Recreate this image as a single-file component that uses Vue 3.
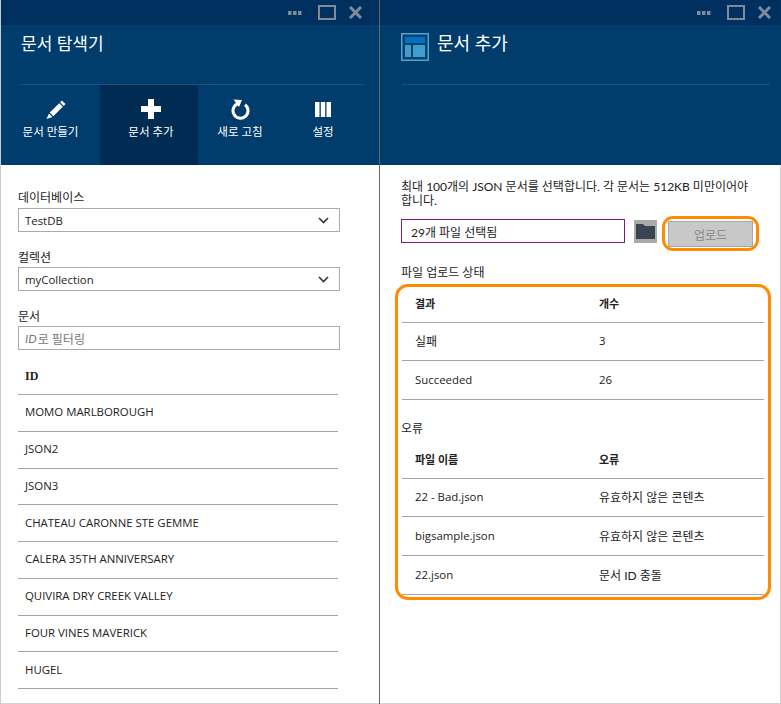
<template>
  <div class="page">
    <section class="blade blade-left">
      <header class="head">
        <div class="strip strip-left">
          <svg class="dots" width="14" height="4" viewBox="0 0 14 4"><path d="M0 0h3.500v4H0zM5 0h3.500v4H5zM10 0h3.500v4H10z" /></svg>
          <svg class="square" width="18" height="15" viewBox="0 0 18 15"><rect x="1" y="1" width="16" height="13" fill="none" stroke-width="2" /></svg>
          <svg class="close" width="13" height="13" viewBox="0 0 13 13"><path d="M1 1l11 11M12 1L1 12" fill="none" stroke-width="3" /></svg>
        </div>
        <div class="title-row title-row-left">
          <h1 class="title">문서 탐색기</h1>
        </div>
        <div class="commands">
          <div class="cmd" v-for="c in commands" :key="c.label" :class="{ active: c.active }">
            <svg class="cmd-icon" :class="c.icon" width="22" height="22" viewBox="0 0 22 22">
              <path v-if="c.icon == 'pencil'" d="M17 2.500l3.500 3.500-1.800 1.900-3.600-3.600zM14.300 5.200l3.500 3.500L8.300 18.200l-3.600-3.600zM4 15.500l3.400 3.400L1.500 21z" fill="#fff" />
              <path v-if="c.icon == 'plus'" d="M8 1h6v7h7v6h-7v7H8v-7H1V8h7z" fill="#fff" />
              <g v-if="c.icon == 'refresh'">
                <path d="M9.500 5.500a7.500 7.500 0 1 0 6.500 1.200" fill="none" stroke="#fff" stroke-width="3" />
                <path d="M3.500 1.500l8.500 0.500-3 7z" fill="#fff" transform="translate(1 0)" />
              </g>
              <path v-if="c.icon == 'columns'" d="M3 4h4.500v15H3zM8.800 4h4.400v15H8.800zM14.500 4H19v15h-4.500z" fill="#fff" />
            </svg>
            <span class="cmd-label">{{ c.label }}</span>
          </div>
        </div>
      </header>
      <div class="body body-left">
        <label class="field-label">데이터베이스</label>
        <div class="select">
          <span class="latin">TestDB</span>
          <svg width="11" height="7" viewBox="0 0 11 7"><path d="M1 1l4.500 4.500L10 1" fill="none" stroke="#333" stroke-width="1.600" /></svg>
        </div>
        <label class="field-label spaced">컬렉션</label>
        <div class="select">
          <span class="latin">myCollection</span>
          <svg width="11" height="7" viewBox="0 0 11 7"><path d="M1 1l4.500 4.500L10 1" fill="none" stroke="#333" stroke-width="1.600" /></svg>
        </div>
        <label class="field-label spaced">문서</label>
        <div class="select filter"><i>ID</i>로 필터링</div>
        <div class="doc-list">
          <div class="doc-head">ID</div>
          <div class="doc-row latin" v-for="d in docs" :key="d">{{ d }}</div>
        </div>
      </div>
    </section>

    <section class="blade blade-right">
      <header class="head">
        <div class="strip strip-right">
          <svg class="dots" width="14" height="4" viewBox="0 0 14 4"><path d="M0 0h3.500v4H0zM5 0h3.500v4H5zM10 0h3.500v4H10z" /></svg>
          <svg class="square" width="18" height="15" viewBox="0 0 18 15"><rect x="1" y="1" width="16" height="13" fill="none" stroke-width="2" /></svg>
          <svg class="close" width="13" height="13" viewBox="0 0 13 13"><path d="M1 1l11 11M12 1L1 12" fill="none" stroke-width="3" /></svg>
        </div>
        <div class="title-row title-row-right">
          <svg class="blade-icon" width="28" height="28" viewBox="0 0 28 28">
            <rect width="28" height="28" fill="#4ba6d3" />
            <rect x="1.500" y="1.500" width="25" height="25" fill="#0b3f6b" />
            <rect x="4" y="4" width="20" height="6" fill="#0072c6" />
            <rect x="4" y="12" width="6" height="12" fill="#3d9fce" />
            <rect x="12" y="12" width="12" height="12" fill="#3d9fce" />
          </svg>
          <h1 class="title">문서 추가</h1>
        </div>
      </header>
      <div class="body body-right">
        <p class="intro">최대 100개의 JSON 문서를 선택합니다. 각 문서는 512KB 미만이어야 합니다.</p>
        <div class="upload-row">
          <div class="file-box">29개 파일 선택됨</div>
          <div class="folder-btn">
            <svg width="19" height="15" viewBox="0 0 19 15"><path d="M0 0h7l2 2h10v13H0z" fill="#3a4552" /></svg>
          </div>
          <div class="ring ring-btn">
            <div class="upload-btn">업로드</div>
          </div>
        </div>
        <div class="status-label">파일 업로드 상태</div>
        <div class="ring ring-table">
          <div class="t-row t-head"><span>결과</span><span>개수</span></div>
          <div class="t-row" v-for="r in results" :key="r[0]">
            <span :class="{ latin: isLatin(r[0]) }">{{ r[0] }}</span><span :class="{ latin: isLatin(r[1]) }">{{ r[1] }}</span>
          </div>
          <div class="err-label">오류</div>
          <div class="t-row t-head"><span>파일 이름</span><span>오류</span></div>
          <div class="t-row" v-for="r in errors" :key="r[0]">
            <span :class="{ latin: isLatin(r[0]) }">{{ r[0] }}</span><span>{{ r[1] }}</span>
          </div>
        </div>
      </div>
    </section>
  </div>
</template>

<script setup>
const commands = [
  { label: "문서 만들기", icon: "pencil" },
  { label: "문서 추가", icon: "plus", active: true },
  { label: "새로 고침", icon: "refresh" },
  { label: "설정", icon: "columns" },
];

const docs = [
  "MOMO MARLBOROUGH",
  "JSON2",
  "JSON3",
  "CHATEAU CARONNE STE GEMME",
  "CALERA 35TH ANNIVERSARY",
  "QUIVIRA DRY CREEK VALLEY",
  "FOUR VINES MAVERICK",
  "HUGEL",
];

const results = [
  ["실패", "3"],
  ["Succeeded", "26"],
];

const errors = [
  ["22 - Bad.json", "유효하지 않은 콘텐츠"],
  ["bigsample.json", "유효하지 않은 콘텐츠"],
  ["22.json", "문서 ID 충돌"],
];

function isLatin(text) {
  return /^[\x00-\x7f]+$/.test(text);
}
</script>

<style>
body {
  background: #fff;
}
</style>

<style scoped>
.page {
  display: flex;
  width: 781px;
  height: 704px;
  overflow: hidden;
  background: #fff;
  color: #222;
  font-family: Lato, "Noto Sans CJK KR", sans-serif;
  font-size: 12px;
}
.latin {
  font-family: "Open Sans", sans-serif;
  font-size: 11.400px;
}
.blade {
  display: flex;
  flex-direction: column;
}
.blade-left {
  width: 380px;
  box-sizing: border-box;
  border-left: 1px solid #ccc;
  border-right: 1px solid #666;
}
.blade-right {
  width: 401px;
}
.head {
  height: 165px;
  background: #003c6c;
  flex-shrink: 0;
}
.body {
  flex: 1;
  min-height: 0;
  border-bottom: 1px solid #d4d4d4;
}
.strip {
  height: 25px;
  background: #00305f;
  display: flex;
  align-items: center;
  justify-content: flex-end;
}
.strip svg {
  fill: #808b97;
  stroke: #808b97;
}
.strip .dots {
  stroke: none;
  margin-right: 16px;
}
.strip .square {
  margin-right: 13px;
}
.strip-left {
  padding-right: 17px;
}
.strip-right {
  padding-right: 10px;
}
.title-row {
  height: 60px;
  box-sizing: border-box;
  border-bottom: 1px solid #1f527d;
  display: flex;
}
.title-row-left {
  margin: 0 15px 0 20px;
  padding-top: 8px;
}
.title-row-right {
  margin: 0 11px 0 22px;
  padding-top: 8px;
}
.title {
  margin: 0;
  font-size: 17px;
  font-weight: 400;
  line-height: 22px;
  color: #fff;
}
.title-row-right .title {
  margin: -1px 0 0 8px;
  font-size: 18px;
}
.blade-icon {
  margin-left: -1px;
}
.commands {
  display: grid;
  grid-template-columns: 99px 98px 84px 82px;
  height: 80px;
}
.cmd {
  display: flex;
  flex-direction: column;
  align-items: center;
  padding-top: 13px;
  box-sizing: border-box;
  color: #fff;
  font-size: 11.500px;
}
.cmd.active {
  background: #002c54;
  padding-left: 4px;
}
.cmd-icon.pencil {
  margin-left: 11px;
}
.cmd-label {
  margin-top: 4px;
  line-height: 16px;
}
.body-left {
  padding: 25px 0 0 17px;
}
.field-label {
  display: block;
  height: 18px;
  line-height: 16px;
}
.field-label.spaced {
  margin-top: 17px;
  line-height: 18px;
}
.select {
  width: 322px;
  height: 24px;
  box-sizing: border-box;
  border: 1px solid #aaa;
  padding: 0 10px 0 6px;
  display: flex;
  align-items: center;
  justify-content: space-between;
}
.filter {
  justify-content: flex-start;
  color: #777;
}
.filter i {
  margin-right: 1px;
}
.doc-list {
  width: 320px;
}
.doc-head {
  height: 45px;
  box-sizing: border-box;
  border-bottom: 1px solid #a5a5a5;
  padding: 18px 0 0 7px;
  font-family: "Liberation Serif", serif;
  font-weight: 700;
  font-size: 12px;
  line-height: 16px;
}
.doc-row {
  height: 36.750px;
  box-sizing: border-box;
  border-bottom: 1px solid #a5a5a5;
  padding: 0 0 2px 7px;
  display: flex;
  align-items: center;
}
.body-right {
  padding: 15px 0 0 21px;
  border-right: 1px solid #d4d4d4;
}
.intro {
  margin: 0;
  width: 350px;
  line-height: 14px;
}
.upload-row {
  display: flex;
  align-items: center;
  margin-top: 8px;
  height: 35px;
}
.file-box {
  width: 224px;
  height: 24px;
  box-sizing: border-box;
  border: 1px solid #7a1b8c;
  padding-left: 9px;
  display: flex;
  align-items: center;
  color: #222;
  margin-top: -5px;
}
.folder-btn {
  width: 23px;
  height: 23px;
  margin: -5px 0 0 9px;
  background: #aaa;
  display: flex;
  align-items: center;
  justify-content: center;
}
.ring {
  border: 3px solid #ff8c00;
  box-sizing: border-box;
}
.ring-btn {
  width: 97px;
  height: 35px;
  border-radius: 11px;
  margin-left: 5px;
  padding: 2px 3px;
}
.upload-btn {
  height: 26px;
  box-sizing: border-box;
  border: 1px solid #a8a8a8;
  background: #c8c8c8;
  color: #888;
  display: flex;
  align-items: center;
  justify-content: center;
}
.status-label {
  margin-top: 14px;
  height: 19px;
  line-height: 16px;
}
.ring-table {
  width: 376px;
  height: 316px;
  margin-left: -6px;
  border-radius: 13px;
  padding: 0 4px;
}
.t-row {
  display: flex;
  align-items: center;
  height: 39px;
  padding-bottom: 2px;
  box-sizing: border-box;
  border-bottom: 1px solid #a5a5a5;
}
.t-row span:first-child {
  width: 197px;
  padding-left: 13px;
  box-sizing: border-box;
}
.t-head + .t-row {
  height: 38px;
}
.t-head {
  height: 36px;
  padding-bottom: 3px;
  font-weight: 700;
  font-size: 11px;
}
.err-label {
  height: 43px;
  box-sizing: border-box;
  padding-top: 21px;
  margin-left: -1px;
  line-height: 16px;
}
</style>
